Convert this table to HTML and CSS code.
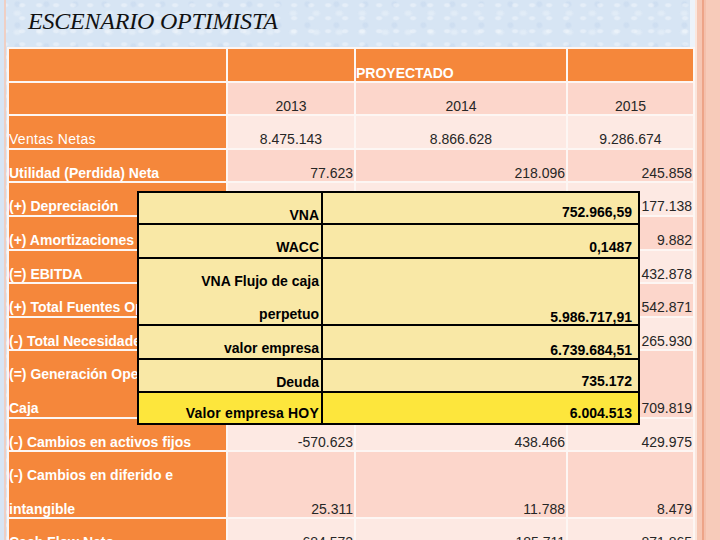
FILE: index.html
```html
<!DOCTYPE html>
<html lang="es">
<head>
<meta charset="utf-8">
<title>Escenario optimista</title>
<link rel="stylesheet" href="styles.css">
</head>
<body>
<div class="page">
  <div class="slide">
    <h1 class="title">ESCENARIO OPTIMISTA</h1>
    <div class="sheet">
      <div class="c hd"></div><div class="c hd"></div><div class="c hd proj">PROYECTADO</div><div class="c hd"></div>

      <div class="c lbl"></div><div class="c dk ctr">2013</div><div class="c dk ctr">2014</div><div class="c dk ctr">2015</div>

      <div class="c lbl reg">Ventas Netas</div><div class="c lt ctr">8.475.143</div><div class="c lt ctr">8.866.628</div><div class="c lt ctr">9.286.674</div>

      <div class="c lbl">Utilidad (Perdida) Neta</div><div class="c dk num">77.623</div><div class="c dk num">218.096</div><div class="c dk num">245.858</div>

      <div class="c lbl">(+) Depreciación</div><div class="c lt num"></div><div class="c lt num"></div><div class="c lt num">177.138</div>

      <div class="c lbl">(+) Amortizaciones</div><div class="c dk num"></div><div class="c dk num"></div><div class="c dk num">9.882</div>

      <div class="c lbl">(=) EBITDA</div><div class="c lt num"></div><div class="c lt num"></div><div class="c lt num">432.878</div>

      <div class="c lbl">(+) Total Fuentes Operacionales</div><div class="c dk num"></div><div class="c dk num"></div><div class="c dk num">542.871</div>

      <div class="c lbl">(-) Total Necesidades Operacionales</div><div class="c lt num"></div><div class="c lt num"></div><div class="c lt num">265.930</div>

      <div class="c lbl">(=) Generación Operacional de<br>Caja</div><div class="c dk num low"></div><div class="c dk num low"></div><div class="c dk num low">709.819</div>

      <div class="c lbl">(-) Cambios en activos fijos</div><div class="c lt num">-570.623</div><div class="c lt num">438.466</div><div class="c lt num">429.975</div>

      <div class="c lbl">(-) Cambios en diferido e<br>intangible</div><div class="c dk num low">25.311</div><div class="c dk num low">11.788</div><div class="c dk num low">8.479</div>

      <div class="c lbl">Cash Flow Neto</div><div class="c lt num">684.572</div><div class="c lt num">185.711</div><div class="c lt num">871.865</div>
    </div>

    <div class="valuation">
      <div class="v-l">VNA</div><div class="v-r up">752.966,59</div>
      <div class="v-l">WACC</div><div class="v-r">0,1487</div>
      <div class="v-l">VNA Flujo de caja<br>perpetuo</div><div class="v-r low">5.986.717,91</div>
      <div class="v-l">valor empresa</div><div class="v-r down">6.739.684,51</div>
      <div class="v-l">Deuda</div><div class="v-r mid">735.172</div>
      <div class="v-l hot">Valor empresa HOY</div><div class="v-r hot">6.004.513</div>
    </div>
  </div>
  <div class="frame"></div>
</div>
</body>
</html>
```

FILE: styles.css
```css
* { box-sizing: border-box; }

html, body {
  margin: 0;
  padding: 0;
}

body {
  width: 720px;
  height: 540px;
  overflow: hidden;
  background: #d7e5f4;
  font-family: "Liberation Sans", Arial, sans-serif;
}

.page {
  display: flex;
  width: 720px;
  height: 540px;
  overflow: hidden;
}

.slide {
  position: relative;
  width: 695px;
  height: 540px;
  flex: none;
  background-color: #d7e5f4;
  background-image:
    radial-gradient(ellipse at 30% 40%, rgba(255,255,255,0.35) 0 2px, transparent 4px),
    radial-gradient(ellipse at 75% 70%, rgba(255,255,255,0.25) 0 2px, transparent 5px),
    radial-gradient(ellipse at 60% 20%, rgba(190,210,235,0.35) 0 2px, transparent 4px);
  background-size: 17px 13px, 23px 19px, 29px 21px;
  box-shadow: inset 4px 0 0 #d7e5f4, inset 6px 0 0 #efcfc4, inset -5px 0 0 rgba(255,255,255,0.55);
}

.title {
  margin: 0;
  height: 47px;
  padding: 8px 0 0 28px;
  font-family: "Liberation Serif", "Times New Roman", serif;
  font-style: italic;
  font-weight: normal;
  font-size: 24px;
  line-height: 27px;
  letter-spacing: -0.2px;
  color: #111;
}

.sheet {
  display: grid;
  grid-template-columns: 217px 126px 210px 125px;
  grid-template-rows: repeat(9, 31.6px) 65.2px 31.6px 65.2px 31.6px;
  gap: 2px;
  padding: 2px;
  margin-left: 7px;
  width: max-content;
  background: #fdf6f3;
}

.c {
  overflow: hidden;
  white-space: nowrap;
  font-size: 14px;
  line-height: 34px;
  padding-top: 6px;
  color: #262626;
}

.hd {
  background: #f5873b;
}

.proj {
  color: #fff;
  font-weight: bold;
  padding-top: 7px;
}

.lbl {
  background: #f5873b;
  color: #fff;
  font-weight: bold;
  padding-left: 0;
}

.lbl.reg {
  font-weight: normal;
  letter-spacing: 0.3px;
}

.lt { background: #fde9e3; }
.dk { background: #fcd6cb; }

.ctr { text-align: center; }
.num { text-align: right; padding-right: 1px; }

.low { padding-top: 40px; }

.valuation {
  position: absolute;
  left: 137px;
  top: 191px;
  width: 503px;
  display: grid;
  grid-template-columns: 182px 315px;
  grid-template-rows: 30px 32px 65px 32px 31px 30px;
  gap: 2px;
  padding: 2px;
  background: #000;
  font-weight: bold;
  font-size: 14px;
  line-height: 33px;
  color: #000;
}

.v-l, .v-r {
  background: #f9e8a6;
  text-align: right;
  white-space: nowrap;
  overflow: hidden;
  padding-top: 6px;
}

.v-l { padding-right: 2px; }
.v-r { padding-right: 6px; }

.v-r.up { padding-top: 3px; }
.v-r.down { padding-top: 8px; }
.v-r.mid { padding-top: 5px; }
.v-r.low { padding-top: 42px; }

.hot { background: #fde63c; padding-top: 4px; }
.v-l.hot { letter-spacing: 0.2px; padding-top: 4px; }
.v-r.hot { padding-top: 4px; }

.frame {
  flex: 1;
  height: 540px;
  background: linear-gradient(90deg, #fbe6dd 0 2px, #f6c6b3 2px 7px, #eda488 7px 9px, #f4c0ac 9px 11px, #f7cbba 11px);
}
```
